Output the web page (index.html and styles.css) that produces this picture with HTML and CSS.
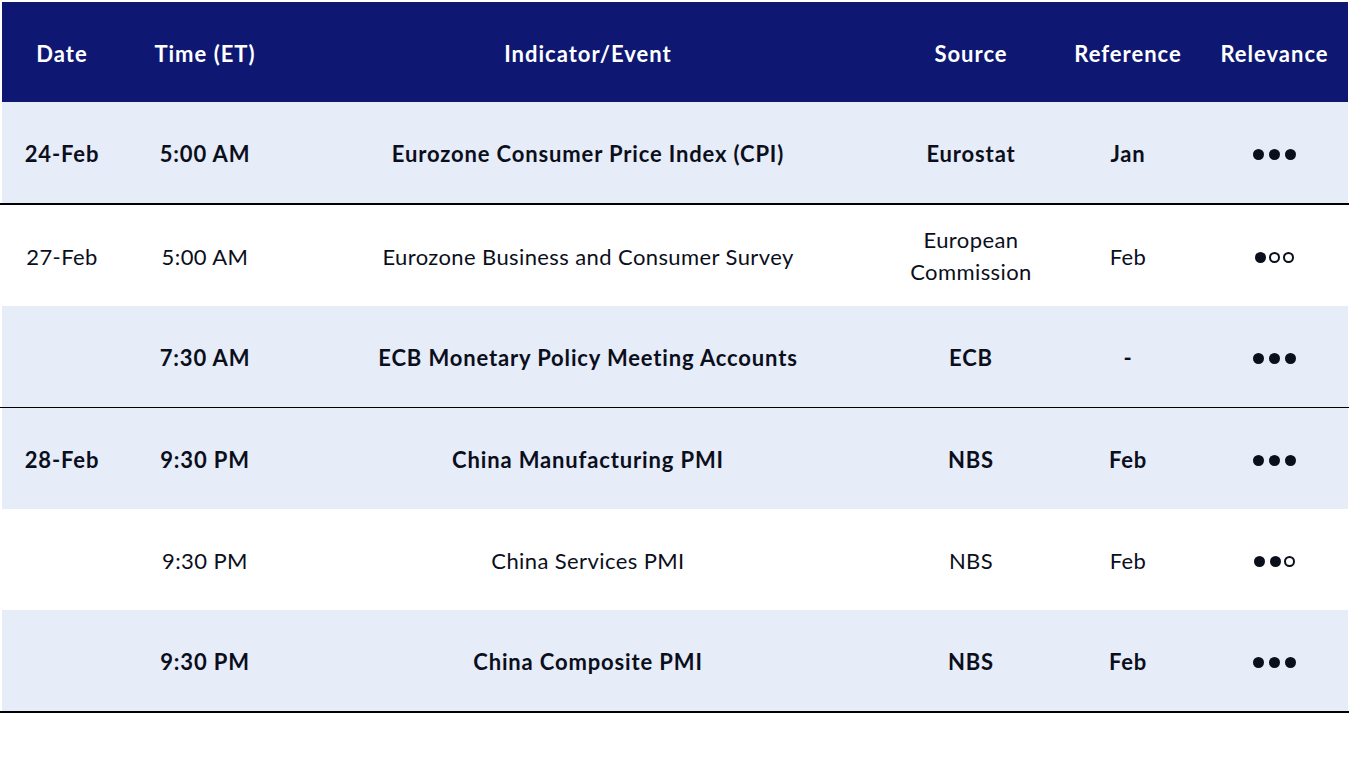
FILE: index.html
```html
<!DOCTYPE html>
<html lang="en">
<head>
<meta charset="utf-8">
<title>Economic Calendar</title>
<link rel="stylesheet" href="styles.css">
</head>
<body>
<div class="calendar">
  <div class="row head">
    <div class="cell">Date</div>
    <div class="cell">Time (ET)</div>
    <div class="cell">Indicator/Event</div>
    <div class="cell">Source</div>
    <div class="cell">Reference</div>
    <div class="cell">Relevance</div>
  </div>

  <div class="group thick">
    <div class="row shade bold">
      <div class="cell">24-Feb</div>
      <div class="cell">5:00 AM</div>
      <div class="cell">Eurozone Consumer Price Index (CPI)</div>
      <div class="cell">Eurostat</div>
      <div class="cell">Jan</div>
      <div class="cell"><span class="dots"><i class="dot on"></i><i class="dot on"></i><i class="dot on"></i></span></div>
    </div>
  </div>

  <div class="group thin">
    <div class="row">
      <div class="cell">27-Feb</div>
      <div class="cell">5:00 AM</div>
      <div class="cell">Eurozone Business and Consumer Survey</div>
      <div class="cell two">European<br>Commission</div>
      <div class="cell">Feb</div>
      <div class="cell"><span class="dots tight"><i class="dot on"></i><i class="dot off"></i><i class="dot off"></i></span></div>
    </div>
    <div class="row shade bold">
      <div class="cell"></div>
      <div class="cell">7:30 AM</div>
      <div class="cell">ECB Monetary Policy Meeting Accounts</div>
      <div class="cell">ECB</div>
      <div class="cell">-</div>
      <div class="cell"><span class="dots"><i class="dot on"></i><i class="dot on"></i><i class="dot on"></i></span></div>
    </div>
  </div>

  <div class="group thick">
    <div class="row shade bold">
      <div class="cell">28-Feb</div>
      <div class="cell">9:30 PM</div>
      <div class="cell">China Manufacturing PMI</div>
      <div class="cell">NBS</div>
      <div class="cell">Feb</div>
      <div class="cell"><span class="dots"><i class="dot on"></i><i class="dot on"></i><i class="dot on"></i></span></div>
    </div>
    <div class="row">
      <div class="cell"></div>
      <div class="cell">9:30 PM</div>
      <div class="cell">China Services PMI</div>
      <div class="cell">NBS</div>
      <div class="cell">Feb</div>
      <div class="cell"><span class="dots mixed"><i class="dot on"></i><i class="dot on"></i><i class="dot off"></i></span></div>
    </div>
    <div class="row shade bold">
      <div class="cell"></div>
      <div class="cell">9:30 PM</div>
      <div class="cell">China Composite PMI</div>
      <div class="cell">NBS</div>
      <div class="cell">Feb</div>
      <div class="cell"><span class="dots"><i class="dot on"></i><i class="dot on"></i><i class="dot on"></i></span></div>
    </div>
  </div>
</div>
</body>
</html>
```

FILE: styles.css
```css
html, body {
  margin: 0;
  padding: 0;
  background: #ffffff;
}

body {
  font-family: Lato, "Open Sans", "Liberation Sans", sans-serif;
  font-size: 22px;
  color: #0b0f1c;
  letter-spacing: 0.4px;
}

.calendar {
  padding-top: 2px;
  width: 1349px;
}

.row {
  display: grid;
  grid-template-columns: 120px 166px 600px 166px 148px 145px;
  height: 101px;
  margin: 0 1px 0 2px;
}

.row.head {
  height: 100px;
  background: #0e1873;
  color: #ffffff;
  font-weight: 700;
  letter-spacing: 1px;
}

.row.shade {
  background: #e6ecf8;
}

.row.bold {
  font-weight: 700;
  letter-spacing: 0.85px;
}

.cell {
  display: flex;
  align-items: center;
  justify-content: center;
  text-align: center;
  line-height: 32px;
  white-space: nowrap;
  padding-top: 3px;
  box-sizing: border-box;
}

.cell.two {
  padding-top: 1px;
}

.group.thick {
  border-bottom: 2px solid #000000;
}

.group.thin {
  border-bottom: 1px solid #000000;
}

.dots {
  display: inline-flex;
  align-items: center;
  gap: 5px;
}

.dots.tight {
  gap: 3px;
}

.dots.mixed .dot.off {
  margin-left: -2px;
}

.dot {
  display: block;
  width: 11px;
  height: 11px;
  border-radius: 50%;
  box-sizing: border-box;
}

.dot.on {
  background: #0b0f1c;
}

.dot.off {
  border: 2px solid #0b0f1c;
  background: transparent;
}
```
